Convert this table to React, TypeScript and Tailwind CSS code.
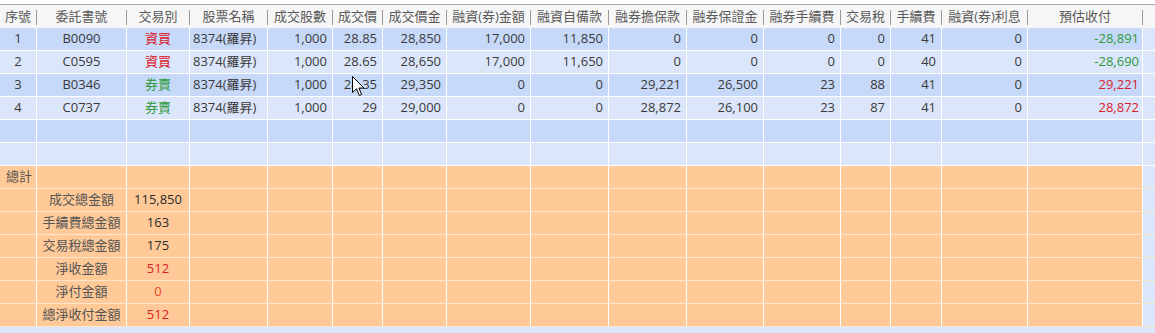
const COLS = 'grid-cols-[37px_90px_63px_78px_65px_50px_64px_84px_78px_78px_77px_77px_50px_51px_86px_115px_1fr]'

const HEADERS = ['序號', '委託書號', '交易別', '股票名稱', '成交股數', '成交價', '成交價金', '融資(券)金額', '融資自備款', '融券擔保款', '融券保證金', '融券手續費', '交易稅', '手續費', '融資(券)利息', '預估收付']

interface Trade {
  seq: string
  no: string
  type: string
  buy: boolean
  name: string
  nums: string[]
  est: string
}

const TRADES: Trade[] = [
  { seq: '1', no: 'B0090', type: '資買', buy: true, name: '8374(羅昇)', nums: ['1,000', '28.85', '28,850', '17,000', '11,850', '0', '0', '0', '0', '41', '0'], est: '-28,891' },
  { seq: '2', no: 'C0595', type: '資買', buy: true, name: '8374(羅昇)', nums: ['1,000', '28.65', '28,650', '17,000', '11,650', '0', '0', '0', '0', '40', '0'], est: '-28,690' },
  { seq: '3', no: 'B0346', type: '券賣', buy: false, name: '8374(羅昇)', nums: ['1,000', '28.35', '29,350', '0', '0', '29,221', '26,500', '23', '88', '41', '0'], est: '29,221' },
  { seq: '4', no: 'C0737', type: '券賣', buy: false, name: '8374(羅昇)', nums: ['1,000', '29', '29,000', '0', '0', '28,872', '26,100', '23', '87', '41', '0'], est: '28,872' },
]

const TOTALS = [
  { label: '成交總金額', value: '115,850', color: 'text-[#2a2a2a]' },
  { label: '手續費總金額', value: '163', color: 'text-[#2a2a2a]' },
  { label: '交易稅總金額', value: '175', color: 'text-[#2a2a2a]' },
  { label: '淨收金額', value: '512', color: 'text-[#d9212b]' },
  { label: '淨付金額', value: '0', color: 'text-[#e2502c]' },
  { label: '總淨收付金額', value: '512', color: 'text-[#d9212b]' },
]

const cell = 'h-full border-r border-white flex items-center min-w-0 whitespace-nowrap'

function rowBg(i: number) {
  return i % 2 === 0 ? 'bg-[#c7d9f9]' : 'bg-[#dce6fb]'
}

function Cursor() {
  return (
    <svg className="absolute left-[352px] top-[76px]" width="13" height="21" viewBox="0 0 13 21">
      <path d="M0.5 0.5 L0.5 16.5 L4.5 12.8 L7.3 19.5 L9.6 18.5 L6.9 12 L12 12 Z" fill="#fff" stroke="#000" strokeWidth="1" />
    </svg>
  )
}

export default function App() {
  return (
    <div
      className="relative w-[1155px] h-[333px] overflow-hidden bg-[#dce6fb] text-[13px] text-[#3a3a3a]"
      style={{ fontFamily: '"Open Sans", "Noto Sans CJK TC", sans-serif' }}
    >
      <div className="h-[4px] bg-white" />
      <div className={`grid ${COLS} h-[24px] bg-[#f6f6f6] border-t border-[#a9a9a9] text-[#5a5a5a]`}>
        {HEADERS.map((h) => (
          <div key={h} className="flex items-center h-full min-w-0">
            <span className="flex-1 text-center whitespace-nowrap">{h}</span>
            <div className="w-px h-[15px] mt-[2px] bg-[#999]" />
          </div>
        ))}
        <div />
      </div>

      {TRADES.map((t, i) => (
        <div key={t.seq} className={`grid ${COLS} h-[23px] border-b border-white`}>
          <div className={`${cell} ${rowBg(i)} justify-center`}>{t.seq}</div>
          <div className={`${cell} ${rowBg(i)} justify-center`}>{t.no}</div>
          <div className={`${cell} ${rowBg(i)} justify-center ${t.buy ? 'text-[#d9212b]' : 'text-[#2e9a3c]'}`}>{t.type}</div>
          <div className={`${cell} ${rowBg(i)} pl-[3px]`}>{t.name}</div>
          {t.nums.map((n, j) => (
            <div key={j} className={`${cell} ${rowBg(i)} justify-end pr-[5px]`}>{n}</div>
          ))}
          <div className={`${cell} ${rowBg(i)} justify-end pr-[3px] ${t.buy ? 'text-[#2e9a3c]' : 'text-[#d9212b]'}`}>{t.est}</div>
          <div className="h-full bg-[#dce6fb]" />
        </div>
      ))}

      {[4, 5].map((i) => (
        <div key={i} className={`grid ${COLS} h-[23px] border-b border-white`}>
          {HEADERS.map((h) => (
            <div key={h} className={`${cell} ${rowBg(i)}`} />
          ))}
          <div className="h-full bg-[#dce6fb]" />
        </div>
      ))}

      <div className={`grid ${COLS} h-[23px] border-b border-[#fde6cf]`}>
        {HEADERS.map((h, j) => (
          <div key={h} className={`${cell} bg-[#ffca98] border-[#fff3e6] text-[#555] ${j === 0 ? 'pl-[6px]' : ''}`}>
            {j === 0 ? '總計' : ''}
          </div>
        ))}
        <div className="h-full bg-[#dce6fb]" />
      </div>

      {TOTALS.map((r) => (
        <div key={r.label} className={`grid ${COLS} h-[23px] border-b border-[#fde6cf]`}>
          {HEADERS.map((h, j) => (
            <div
              key={h}
              className={`${cell} bg-[#ffca98] border-[#fff3e6] justify-center ${j === 1 ? 'text-[#555]' : ''} ${j === 2 ? r.color : ''}`}
            >
              {j === 1 ? r.label : j === 2 ? r.value : ''}
            </div>
          ))}
          <div className="h-full bg-[#dce6fb]" />
        </div>
      ))}

      <Cursor />
    </div>
  )
}
